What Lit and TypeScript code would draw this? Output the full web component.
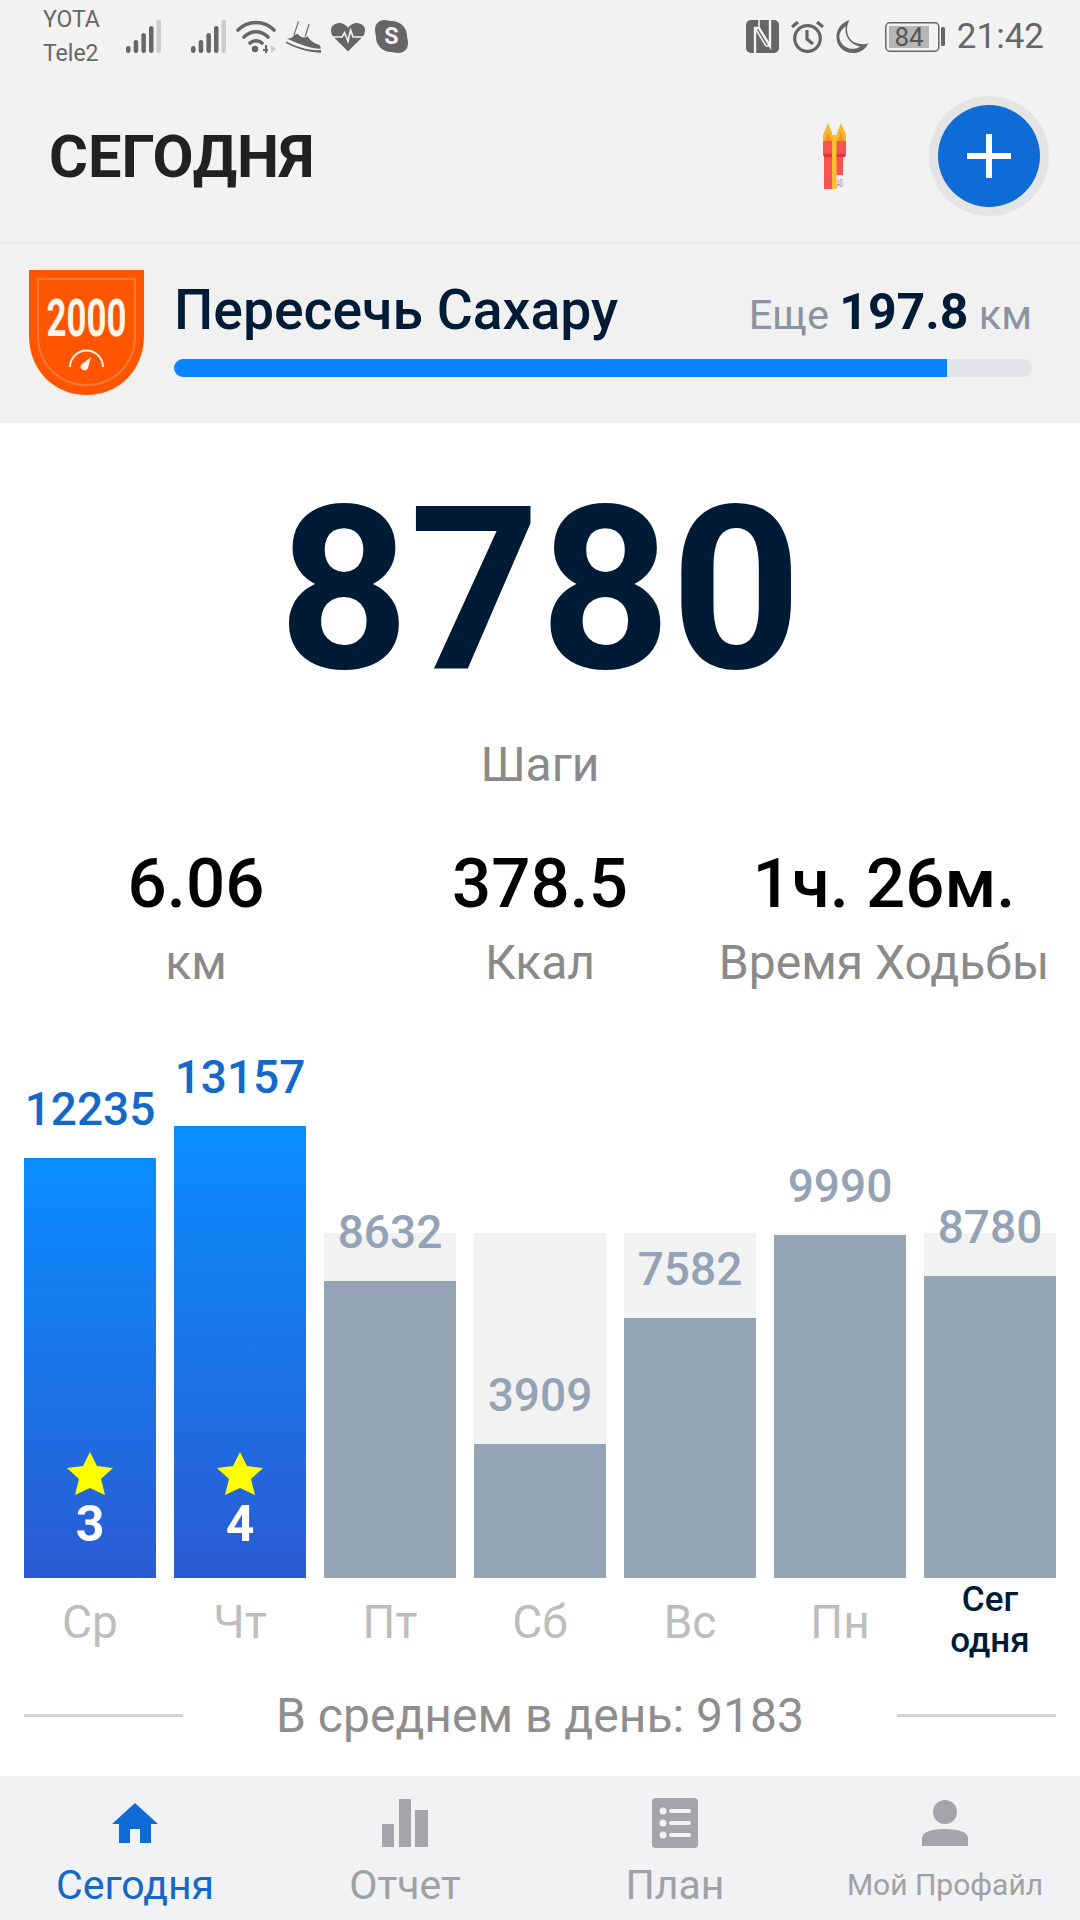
import { LitElement, html, css, svg } from "lit";
import { customElement } from "lit/decorators.js";

const PX_PER_STEP = 0.03435;

type Day = { name: string; steps: number; stars?: number; today?: boolean };

const days: Day[] = [
  { name: "Ср", steps: 12235, stars: 3 },
  { name: "Чт", steps: 13157, stars: 4 },
  { name: "Пт", steps: 8632 },
  { name: "Сб", steps: 3909 },
  { name: "Вс", steps: 7582 },
  { name: "Пн", steps: 9990 },
  { name: "Сег одня", steps: 8780, today: true },
];

const signal = svg`<svg width="35" height="33" viewBox="0 0 35 33">
  <rect x="0" y="26" width="4.500" height="7" rx="2.200" fill="#666"/>
  <rect x="7.700" y="20" width="4.500" height="13" rx="2.200" fill="#666"/>
  <rect x="15.400" y="13" width="4.500" height="20" rx="2.200" fill="#666"/>
  <rect x="23" y="6" width="4.500" height="27" rx="2.200" fill="#666"/>
  <rect x="30.500" y="0" width="4.500" height="33" rx="2" fill="#ccc"/>
</svg>`;

const wifi = svg`<svg width="40" height="34" viewBox="0 0 40 34" fill="none" stroke="#666" stroke-width="3.600" stroke-linecap="round">
  <path d="M2 10C12 0 28 0 38 10"/>
  <path d="M8 17C15 10 25 10 32 17"/>
  <path d="M14 23C17 20 23 20 26 23"/>
  <circle cx="19" cy="29" r="3.200" fill="#666" stroke="none"/>
  <path d="M30 25v8M27 30h5" stroke-width="2.200" stroke-linecap="butt"/>
  <path d="M35 25l5 4-5 4z" fill="#ccc" stroke="none"/>
</svg>`;

const shoe = svg`<svg width="35" height="32" viewBox="0 0 106 95">
  <path d="M38 0L24 42M70 8L58 46" fill="none" stroke="#666" stroke-width="3.500"/>
  <path d="M24 42L36 38C42 50 58 52 66 45C70 56 84 66 98 70C104 72 106 78 105 83C80 84 40 70 2 52C10 52 20 50 24 42Z" fill="#666"/>
  <path d="M0 60C30 76 70 90 106 87V95C70 96 25 80 0 66Z" fill="#666"/>
</svg>`;

const heart = svg`<svg width="34" height="30" viewBox="0 0 40 34">
  <path d="M20 34L3 17C-1 12-1 6 3 3c5-4 12-3 17 3 5-6 12-7 17-3 4 3 4 9 0 14z" fill="#666"/>
  <path d="M0 17h13l3-5 4 10 3-13 3 8h14" fill="none" stroke="#f2f2f2" stroke-width="2"/>
</svg>`;

const skype = svg`<svg width="33" height="33" viewBox="0 0 34 34">
  <path d="M10 0c2 0 4 1 7 1 9 0 16 7 16 15 0 3 1 4 1 8 0 6-4 10-10 10-3 0-5-1-7-1C8 33 1 26 1 18c0-3-1-5-1-8C0 4 4 0 10 0z" fill="#666"/>
  <text x="17" y="25" text-anchor="middle" font-family="Roboto" font-weight="700" font-size="24" fill="#f2f2f2">S</text>
</svg>`;

const nfc = svg`<svg width="33" height="33" viewBox="0 0 33 33">
  <rect width="33" height="33" rx="5" fill="#666"/>
  <path d="M9 33V8h4l11 18V0" fill="none" stroke="#f2f2f2" stroke-width="2.400"/>
  <path d="M13 8V0M9 8l11 18h4" fill="none" stroke="#f2f2f2" stroke-width="1.600"/>
</svg>`;

const alarm = svg`<svg width="33" height="33" viewBox="0 0 33 33" fill="none" stroke="#666" stroke-width="3.200">
  <circle cx="16.500" cy="18.500" r="12.800"/>
  <path d="M16 10v9l6 5M1 7l6-5M32 7l-6-5"/>
</svg>`;

const moon = svg`<svg width="33" height="33" viewBox="0 0 34 35">
  <path d="M14 0C4 3 0 11 0 18c0 10 8 17 17 17 8 0 14-4 17-11-3 2-7 2-11 1C12 23 8 10 14 0zM10 7c-2 8 3 19 15 21-8 6-21 1-22-10 0-4 3-9 7-11z" fill="#666" fill-rule="evenodd"/>
</svg>`;

const battery = svg`<svg width="60" height="30" viewBox="0 0 60 30">
  <rect x="0.800" y="0.800" width="53" height="28.400" rx="4" fill="none" stroke="#666" stroke-width="1.500"/>
  <rect x="4" y="4" width="40" height="22" fill="#b5b5b5"/>
  <rect x="56" y="5" width="4" height="19" rx="1.500" fill="#666"/>
  <text x="24" y="24" text-anchor="middle" font-family="Roboto" font-size="26" fill="#555">84</text>
</svg>`;

const gift = svg`<svg width="23" height="66" viewBox="0 0 23 66">
  <path d="M5 0L9 10 11 20V22H0V12Z" fill="#f8b62d"/>
  <path d="M18 0L14 10 12 20V22H23V12Z" fill="#f8b62d"/>
  <path d="M5 10l5 10H1zM18 10l-5 10h9z" fill="#f0932b"/>
  <rect x="0" y="18" width="23" height="15" fill="#f65353"/>
  <rect x="1" y="33" width="19" height="33" fill="#f65353"/>
  <rect x="1" y="31" width="21" height="3" fill="#d9363e"/>
  <rect x="9" y="12" width="4.500" height="54" fill="#fbc02d"/>
  <rect x="13.500" y="52" width="7" height="14" fill="#f2f2f2"/>
  <text transform="translate(17 64) scale(0.45 1)" text-anchor="middle" font-family="Roboto" font-size="10" fill="#888">AD</text>
</svg>`;

const shield = svg`<svg width="115" height="125" viewBox="0 0 115 125">
  <path d="M0 0H115V66C115 100 90 125 57.500 125S0 100 0 66Z" fill="#ff5500"/>
  <path d="M9 9H106V66C106 94 85 115 57.500 115S9 94 9 66Z" fill="none" stroke="#ff7a38" stroke-width="2"/>
  <text transform="translate(57.500 66) scale(0.67 1)" text-anchor="middle" font-family="Roboto" font-weight="700" font-size="52" fill="#fff5ea">2000</text>
  <path d="M41 97a16.500 16.500 0 0 1 33 0" fill="none" stroke="#fff5ea" stroke-width="2"/>
  <path d="M52 95l10-8-3 11a3.500 3.500 0 0 1-7-3z" fill="#fff5ea"/>
</svg>`;

const homeIcon = svg`<svg width="46" height="40" viewBox="0 0 46 40">
  <path d="M23 0L46 21H39V40H28V26H18V40H7V21H0Z" fill="#0f6cd6"/>
</svg>`;

const barsIcon = svg`<svg width="46" height="48" viewBox="0 0 46 48" fill="#a4a5a8">
  <rect x="0" y="25" width="12" height="23"/>
  <rect x="17" y="0" width="12" height="48"/>
  <rect x="33" y="11" width="13" height="37"/>
</svg>`;

const listIcon = svg`<svg width="46" height="50" viewBox="0 0 46 50">
  <rect width="46" height="50" rx="4" fill="#a4a5a8"/>
  <g fill="#f0f2f4">
    <circle cx="11" cy="13" r="3.500"/><rect x="17" y="11" width="22" height="4" rx="2"/>
    <circle cx="11" cy="25" r="3.500"/><rect x="17" y="23" width="22" height="4" rx="2"/>
    <circle cx="11" cy="37" r="3.500"/><rect x="17" y="35" width="22" height="4" rx="2"/>
  </g>
</svg>`;

const userIcon = svg`<svg width="46" height="46" viewBox="0 0 46 46" fill="#a4a5a8">
  <circle cx="23" cy="12" r="12"/>
  <path d="M0 46V38C0 32 10 29 23 29S46 32 46 38V46Z"/>
</svg>`;

@customElement("app-root")
export class AppRoot extends LitElement {
  static styles = css`
    :host {
      display: block;
      width: 1080px;
      height: 1920px;
      overflow: hidden;
      background: #fff;
      font-family: Roboto, "Noto Sans", sans-serif;
    }

    .status {
      display: flex;
      align-items: center;
      height: 76px;
      padding: 0 36px 3px 43px;
      box-sizing: border-box;
      background: #f2f2f2;
      color: #666;
    }
    .carriers {
      display: flex;
      flex-direction: column;
      font-size: 23px;
      line-height: 34px;
      width: 83px;
    }
    .status-icons {
      display: flex;
      align-items: center;
      gap: 10px;
    }
    .signal-gap {
      display: flex;
      margin-right: 20px;
    }
    .status-right {
      display: flex;
      align-items: center;
      gap: 12px;
      margin-left: auto;
    }
    .moon {
      display: flex;
      margin-right: 4px;
    }
    .time {
      font-size: 35px;
    }

    .header {
      display: flex;
      align-items: center;
      height: 168px;
      padding: 0 40px 0 49px;
      box-sizing: border-box;
      background: #f2f2f2;
      border-bottom: 3px solid #eaeaea;
    }
    .title {
      font-size: 59.5px;
      font-weight: 700;
      color: #212121;
      padding-bottom: 4px;
    }
    .gift {
      display: flex;
      margin-left: auto;
      margin-right: 92px;
      margin-bottom: 6px;
    }
    .fab {
      display: flex;
      align-items: center;
      justify-content: center;
      width: 102px;
      height: 102px;
      border-radius: 50%;
      background: #0f6cd6;
      box-shadow: 0 0 0 9px #e4e4e4;
      margin-bottom: 6px;
    }

    .banner {
      display: flex;
      height: 179px;
      padding: 26px 48px 0 29px;
      box-sizing: border-box;
      background: #f1f1f1;
    }
    .banner-body {
      flex: 1;
      margin-left: 30px;
    }
    .banner-top {
      display: flex;
      align-items: baseline;
      justify-content: space-between;
      height: 89px;
      line-height: 82px;
    }
    .banner-name {
      font-size: 55.300px;
      font-weight: 500;
      color: #001b35;
    }
    .remaining {
      font-size: 41.500px;
      color: #8a93a0;
    }
    .remaining b {
      font-size: 50px;
      font-weight: 700;
      color: #001b35;
    }
    .progress {
      height: 18px;
      border-radius: 9px;
      background: #e2e5e6;
      overflow: hidden;
    }
    .progress-fill {
      height: 100%;
      background: #0a84ff;
    }

    .steps {
      margin-top: 36px;
      text-align: center;
      font-size: 228px;
      line-height: 262px;
      font-weight: 700;
      color: #001b35;
    }
    .steps-label {
      margin-top: 14px;
      text-align: center;
      font-size: 48px;
      line-height: 60px;
      color: #8a8a8a;
    }

    .stats {
      display: grid;
      grid-template-columns: 344px 344px 344px;
      margin-top: 49px;
      padding-left: 24px;
      text-align: center;
    }
    .stat-value {
      font-size: 69px;
      line-height: 80px;
      font-weight: 500;
      color: #000;
    }
    .stat-label {
      margin-top: 9px;
      font-size: 48px;
      line-height: 60px;
      color: #8a8a8a;
      white-space: nowrap;
    }

    .chart {
      display: grid;
      grid-template-columns: repeat(7, 132px);
      gap: 18px;
      padding: 0 24px;
      margin-top: 45px;
    }
    .plot {
      position: relative;
      display: flex;
      flex-direction: column;
      justify-content: flex-end;
      height: 540px;
    }
    .track {
      position: absolute;
      left: 0;
      right: 0;
      bottom: 0;
      height: 345px;
      background: #f2f2f2;
    }
    .value {
      position: relative;
      margin-bottom: 19px;
      text-align: center;
      font-size: 46px;
      line-height: 60px;
      font-weight: 500;
      color: #93a3b5;
    }
    .value.over {
      color: #1368c8;
    }
    .bar {
      position: relative;
      display: flex;
      flex-direction: column;
      align-items: center;
      justify-content: flex-end;
      padding-bottom: 29px;
      box-sizing: border-box;
      background: #94a4b5;
    }
    .bar.over {
      background: linear-gradient(180deg, #0a8eff 0%, #2b5bd3 100%);
    }
    .star {
      display: flex;
      margin-bottom: 4px;
    }
    .stars {
      font-size: 50px;
      line-height: 50px;
      font-weight: 700;
      color: #fff;
    }
    .day {
      display: flex;
      align-items: center;
      justify-content: center;
      height: 84px;
      padding-top: 3px;
      box-sizing: border-box;
      text-align: center;
      font-size: 46px;
      color: #bdbdbd;
    }
    .day.today {
      padding-top: 0;
      font-size: 35px;
      line-height: 41px;
      font-weight: 500;
      color: #001b35;
    }

    .average {
      display: flex;
      align-items: center;
      justify-content: space-between;
      height: 74px;
      margin-top: 16px;
      padding: 0 24px;
      font-size: 48px;
      color: #8e8e8e;
    }
    .average i {
      width: 159px;
      height: 3px;
      background: #d5d5d5;
    }

    .nav {
      display: grid;
      grid-template-columns: repeat(4, 270px);
      height: 144px;
      margin-top: 24px;
      background: #f0f2f4;
    }
    .nav-item {
      display: flex;
      flex-direction: column;
      align-items: center;
      font-size: 41px;
      color: #a0a1a4;
    }
    .nav-item.active {
      color: #1368c8;
    }
    .nav-icon {
      display: flex;
      align-items: center;
      justify-content: center;
      height: 52px;
      margin-top: 21px;
    }
    .nav-label {
      line-height: 50px;
      margin-top: 11px;
    }
    .nav-label.small {
      font-size: 30px;
    }
  `;

  private renderDay(day: Day) {
    const over = day.steps > 10000;
    return html`
      <div>
        <div class="plot">
          <div class="track"></div>
          <div class="value ${over ? "over" : ""}">${day.steps}</div>
          <div class="bar ${over ? "over" : ""}" style="height:${Math.round(day.steps * PX_PER_STEP)}px">
            ${day.stars
              ? html`<span class="star">
                    <svg width="46" height="43" viewBox="0 0 46 43">
                      <path d="M23 0l7 14 16 2-12 11 4 16-15-7-15 7 4-16L0 16l16-2z" fill="#ffff00" />
                    </svg>
                  </span>
                  <span class="stars">${day.stars}</span>`
              : ""}
          </div>
        </div>
        <div class="day ${day.today ? "today" : ""}">${day.name}</div>
      </div>
    `;
  }

  render() {
    return html`
      <div class="status">
        <div class="carriers"><span>YOTA</span><span>Tele2</span></div>
        <div class="status-icons">
          <span class="signal-gap">${signal}</span>
          ${signal} ${wifi} ${shoe} ${heart} ${skype}
        </div>
        <div class="status-right">
          ${nfc} ${alarm} <span class="moon">${moon}</span> ${battery}<span class="time">21:42</span>
        </div>
      </div>

      <div class="header">
        <div class="title">СЕГОДНЯ</div>
        <span class="gift">${gift}</span>
        <div class="fab">
          <svg width="44" height="44" viewBox="0 0 44 44"><path d="M19 0h6v19h19v6H25v19h-6V25H0v-6h19z" fill="#fff" /></svg>
        </div>
      </div>

      <div class="banner">
        ${shield}
        <div class="banner-body">
          <div class="banner-top">
            <span class="banner-name">Пересечь Сахару</span>
            <span class="remaining">Еще <b>197.8</b> км</span>
          </div>
          <div class="progress"><div class="progress-fill" style="width:90.1%"></div></div>
        </div>
      </div>

      <div class="steps">8780</div>
      <div class="steps-label">Шаги</div>

      <div class="stats">
        <div><div class="stat-value">6.06</div><div class="stat-label">км</div></div>
        <div><div class="stat-value">378.5</div><div class="stat-label">Ккал</div></div>
        <div><div class="stat-value">1ч. 26м.</div><div class="stat-label">Время Ходьбы</div></div>
      </div>

      <div class="chart">${days.map((d) => this.renderDay(d))}</div>

      <div class="average"><i></i><span>В среднем в день: 9183</span><i></i></div>

      <div class="nav">
        <div class="nav-item active">
          <div class="nav-icon">${homeIcon}</div>
          <div class="nav-label">Сегодня</div>
        </div>
        <div class="nav-item">
          <div class="nav-icon">${barsIcon}</div>
          <div class="nav-label">Отчет</div>
        </div>
        <div class="nav-item">
          <div class="nav-icon">${listIcon}</div>
          <div class="nav-label">План</div>
        </div>
        <div class="nav-item">
          <div class="nav-icon">${userIcon}</div>
          <div class="nav-label small">Мой Профайл</div>
        </div>
      </div>
    `;
  }
}
